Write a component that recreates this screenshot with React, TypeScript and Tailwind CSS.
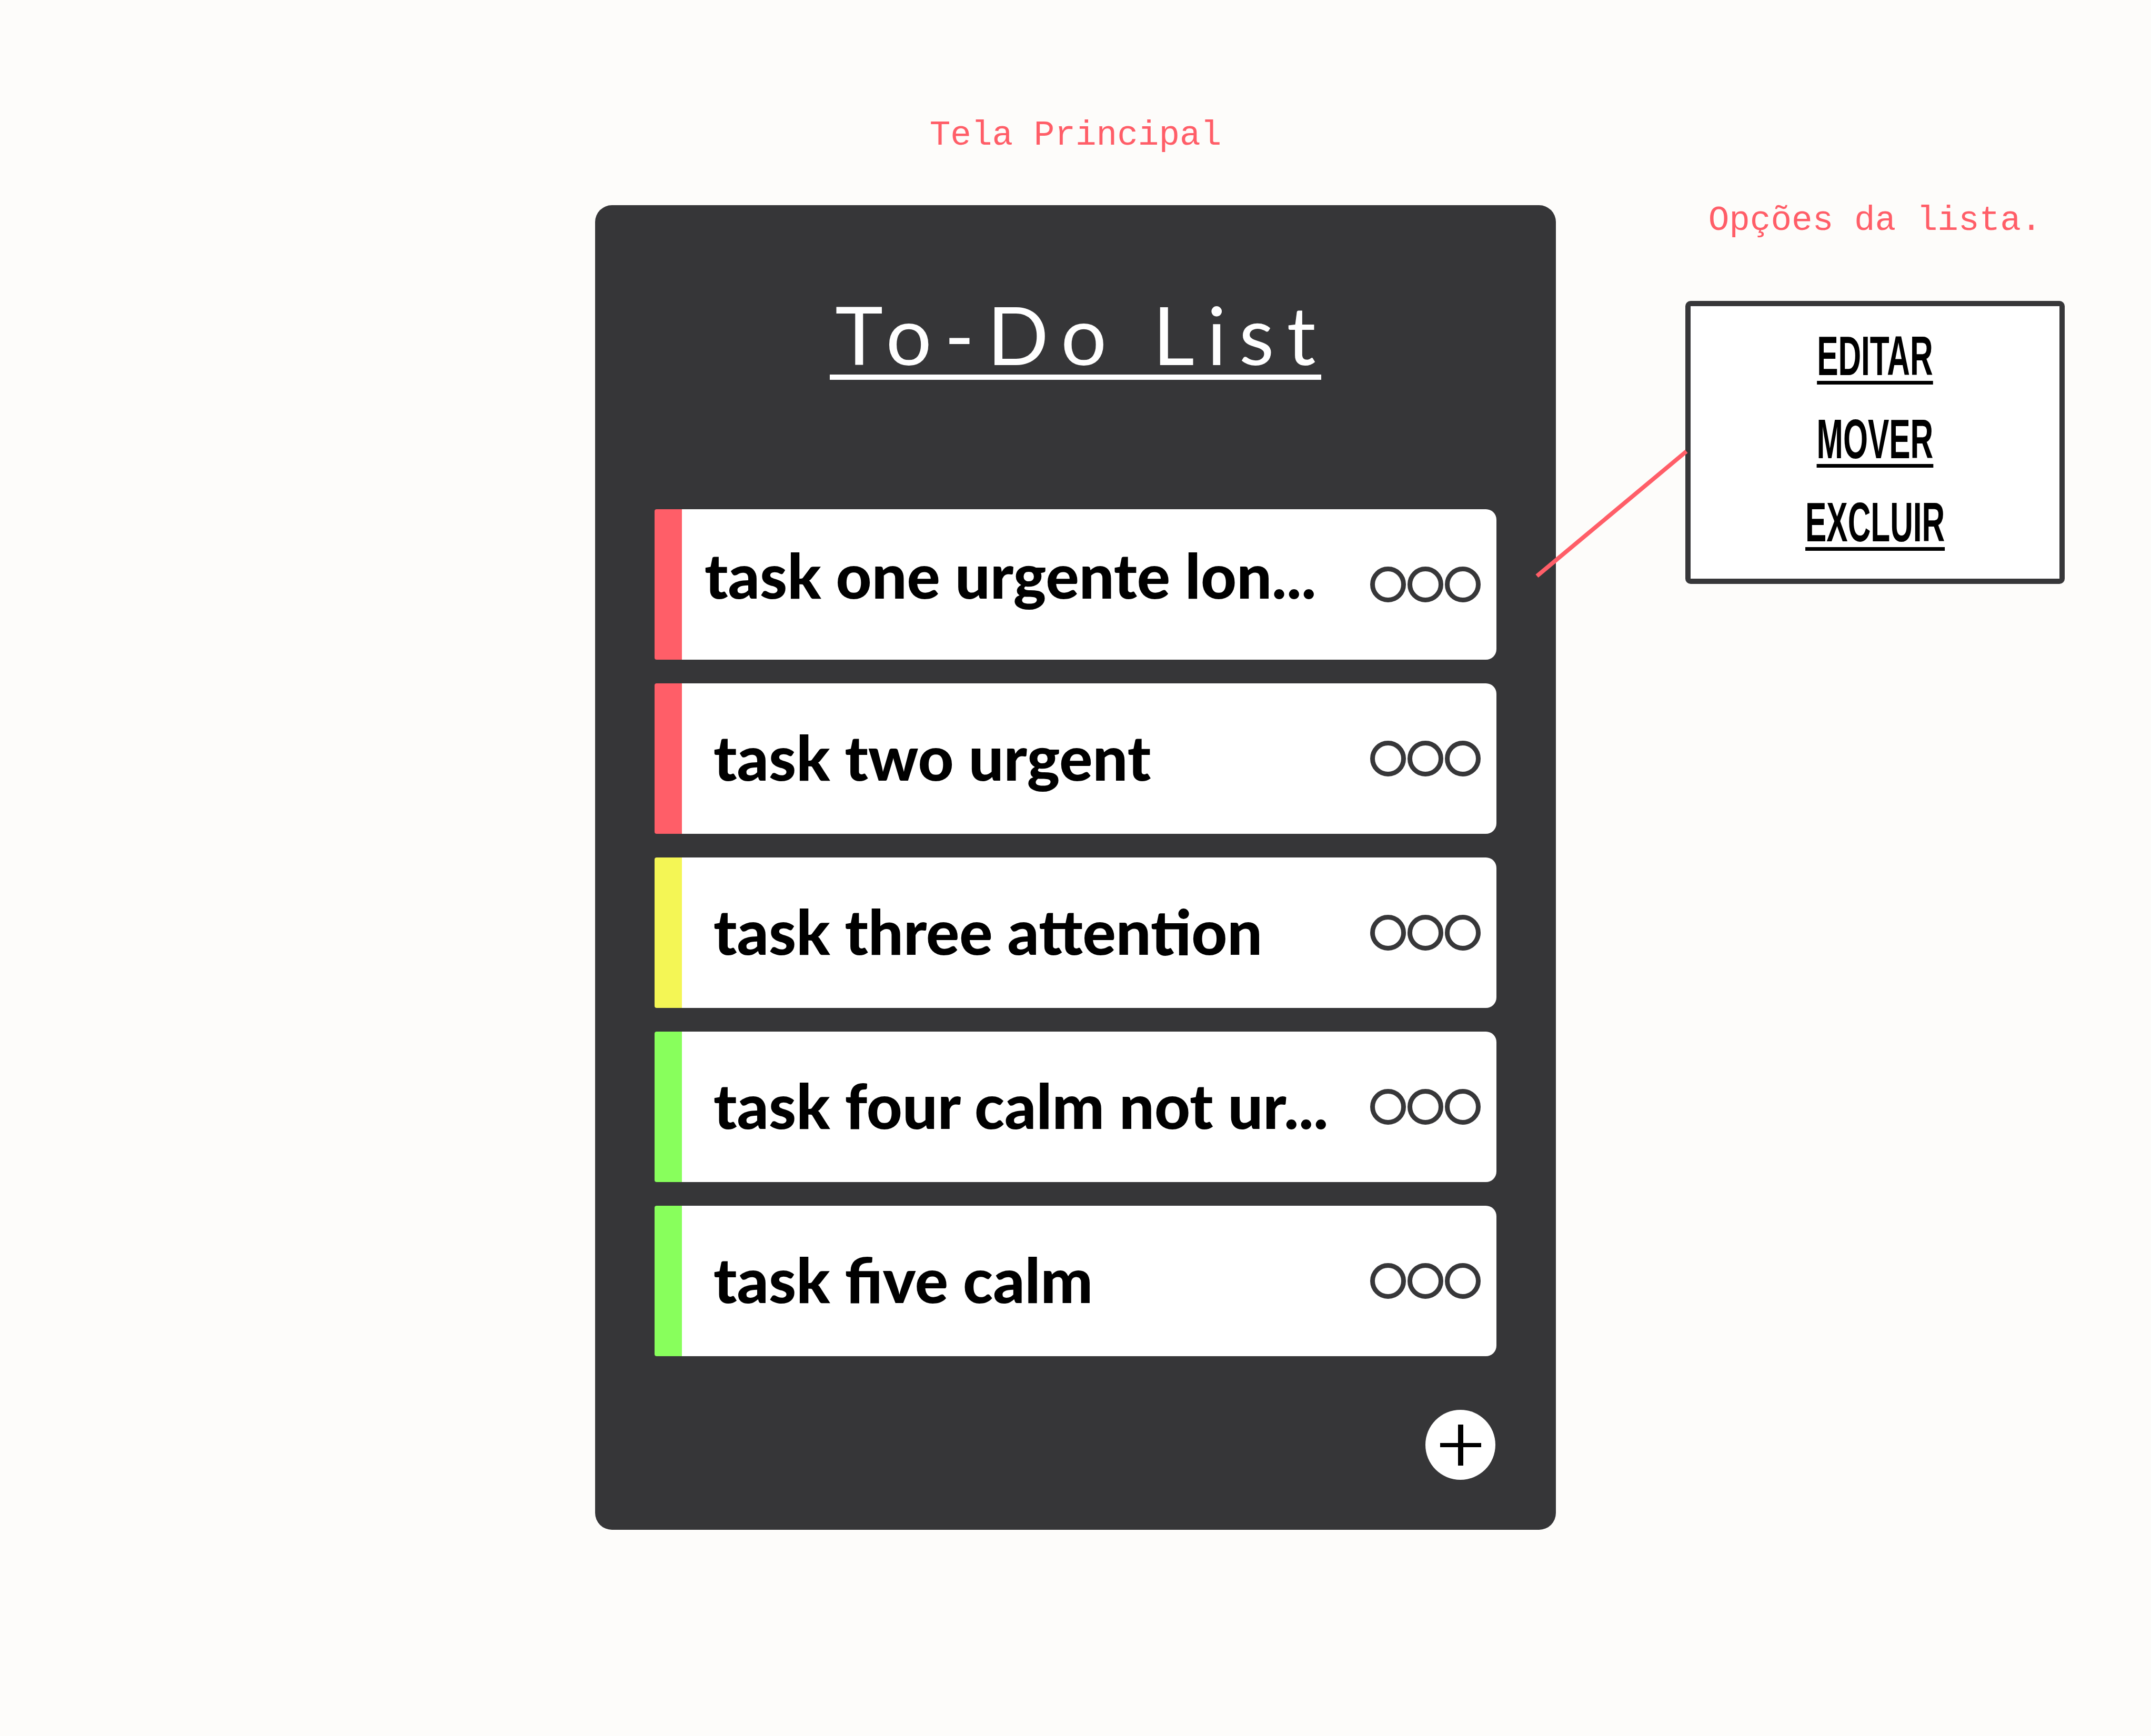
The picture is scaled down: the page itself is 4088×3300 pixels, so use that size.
import React from "react";

type Task = { id: number; label: string; color: string; pad: string };

const TASKS: Task[] = [
  { id: 1, label: "task one urgente lon...", color: "bg-[#ff5e68]", pad: "pl-[43px] pb-[36px]" },
  { id: 2, label: "task two urgent", color: "bg-[#ff5e68]", pad: "pl-[60px] pb-[6px]" },
  { id: 3, label: "task three attention", color: "bg-[#f4f655]", pad: "pl-[60px] pb-[6px]" },
  { id: 4, label: "task four calm not ur...", color: "bg-[#88ff5c]", pad: "pl-[60px] pb-[6px]" },
  { id: 5, label: "task five calm", color: "bg-[#88ff5c]", pad: "pl-[60px] pb-[6px]" },
];

const OPTIONS = ["EDITAR", "MOVER", "EXCLUIR"];

function Dots() {
  return (
    <div className="flex gap-[3px]">
      <span className="h-[68px] w-[68px] rounded-full border-[9px] border-[#373739]" />
      <span className="h-[68px] w-[68px] rounded-full border-[9px] border-[#373739]" />
      <span className="h-[68px] w-[68px] rounded-full border-[9px] border-[#373739]" />
    </div>
  );
}

function TaskRow({ task }: { task: Task }) {
  return (
    <div className="flex h-[286px] w-full">
      <div className={`w-[52px] shrink-0 rounded-l-[4px] ${task.color}`} />
      <div className="flex flex-1 items-center justify-between rounded-r-[20px] bg-white pr-[30px]">
        <span
          className={`text-[118px] font-black leading-none text-black ${task.pad}`}
          style={{ fontFamily: "Lato, 'Open Sans', sans-serif" }}
        >
          {task.label}
        </span>
        <Dots />
      </div>
    </div>
  );
}

export default function App() {
  return (
    <div className="relative h-[3300px] w-[4088px] overflow-hidden bg-[#fdfcfa]">
      <div className="flex">
        {/* espaço à esquerda */}
        <div className="w-[1131px] shrink-0" />

        {/* tela principal */}
        <div className="flex w-[1826px] shrink-0 flex-col items-center pt-[225px]">
          <p
            className="text-[66px] leading-none text-[#ff5e68]"
            style={{ fontFamily: "'Liberation Mono', monospace" }}
          >
            Tela Principal
          </p>
          <div className="mt-[99px] flex h-[2518px] w-full flex-col rounded-[32px] bg-[#363638] px-[113px] pt-[168px]">
            <div className="flex justify-center">
              <h1
                className="inline-block border-b-[10px] border-white px-[10px] text-[154px] font-normal leading-none text-white"
                style={{ fontFamily: "Lato, sans-serif" }}
              >
                <span className="tracking-[24px]">To-Do Lis</span>t
              </h1>
            </div>
            <div className="mt-[246px] flex flex-col gap-[45px]">
              {TASKS.map((t) => (
                <TaskRow key={t.id} task={t} />
              ))}
            </div>
            <div className="mt-[102px] flex justify-end pr-[2px]">
              <button className="flex h-[133px] w-[133px] items-center justify-center rounded-full bg-white">
                <svg width="78" height="78" viewBox="0 0 78 78">
                  <rect x="0" y="35" width="78" height="8" fill="#000" />
                  <rect x="34" y="0" width="10" height="78" fill="#000" />
                </svg>
              </button>
            </div>
          </div>
        </div>

        {/* opções da lista */}
        <div className="shrink-0 pl-[246px] pt-[387px]">
          <div className="flex w-[721px] flex-col items-center">
            <p
              className="text-[66px] leading-none text-[#ff5e68]"
              style={{ fontFamily: "'Liberation Mono', monospace" }}
            >
              Opções da lista.
            </p>
            <div className="mt-[119px] flex h-[538px] w-[721px] flex-col items-center gap-[55px] rounded-[10px] border-[10px] border-[#373739] bg-white pt-[46px]">
              {OPTIONS.map((o) => (
                <span
                  key={o}
                  className="inline-block origin-center scale-x-[0.57] border-b-[7px] border-black text-[106px] font-bold leading-[96px] text-black"
                  style={{ fontFamily: "'Liberation Sans', Arial, sans-serif" }}
                >
                  {o}
                </span>
              ))}
            </div>
          </div>
        </div>
      </div>

      {/* linha ligando a tarefa às opções */}
      <svg className="pointer-events-none absolute left-0 top-0" width="4088" height="3300">
        <line x1="2921" y1="1095" x2="3205" y2="858" stroke="#ff5e68" strokeWidth="8" />
      </svg>
    </div>
  );
}
